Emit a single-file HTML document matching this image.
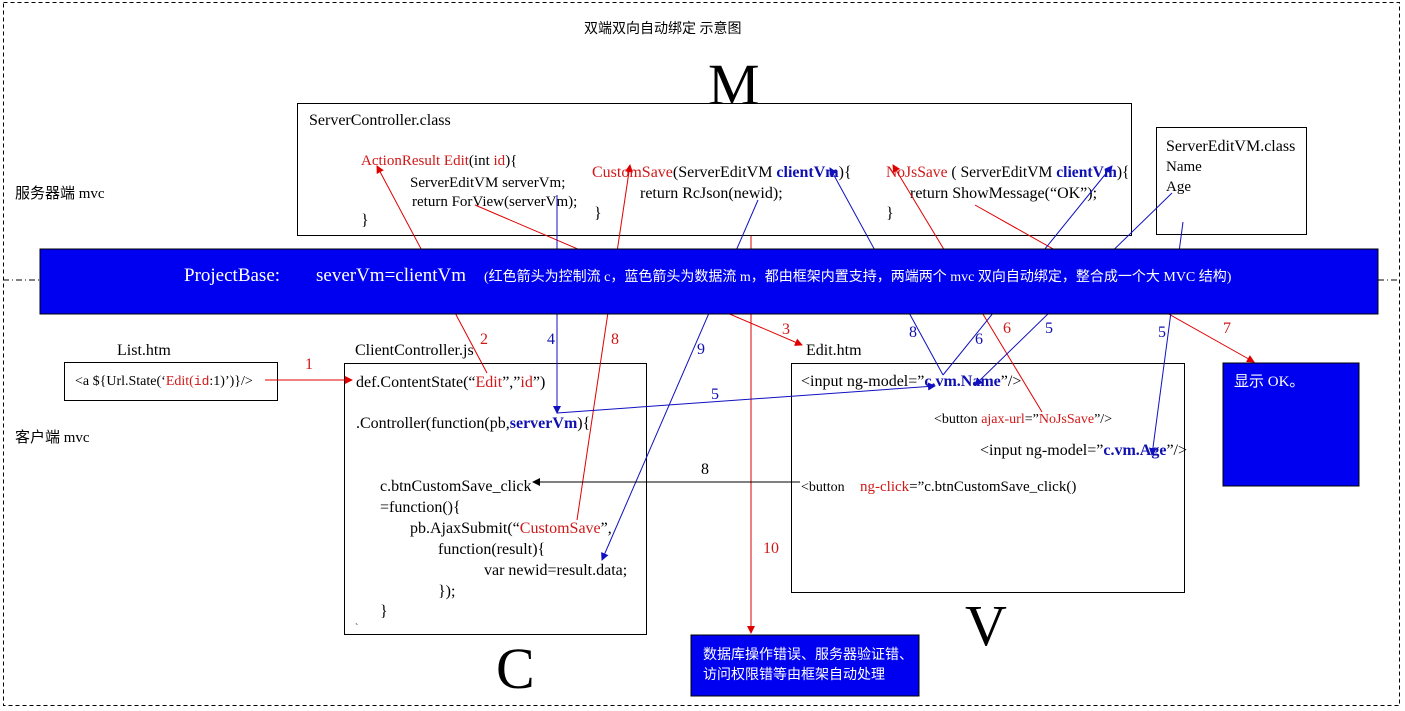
<!DOCTYPE html>
<html><head><meta charset="utf-8"><style>
body{margin:0;background:#fff}
svg{display:block}
text{font-family:"Liberation Serif","Noto Serif CJK SC",serif;font-size:16px;fill:#000}
.cn{font-family:"Liberation Serif","Noto Sans CJK SC",sans-serif}
.r{fill:#d01818}.b{fill:#1010b0;font-weight:bold}.w{fill:#fff}
</style></head><body>
<svg width="1405" height="711" viewBox="0 0 1405 711">
<defs>
<marker id="ar" markerWidth="8" markerHeight="8" refX="7" refY="4" orient="auto" markerUnits="userSpaceOnUse"><path d="M0,0L8,4L0,8z" fill="#e00000"/></marker>
<marker id="ab" markerWidth="8" markerHeight="8" refX="7" refY="4" orient="auto" markerUnits="userSpaceOnUse"><path d="M0,0L8,4L0,8z" fill="#1010c0"/></marker>
<marker id="ak" markerWidth="8" markerHeight="8" refX="7" refY="4" orient="auto" markerUnits="userSpaceOnUse"><path d="M0,0L8,4L0,8z" fill="#000"/></marker>
</defs>
<rect x="3.5" y="2.5" width="1396" height="703" fill="none" stroke="#000" stroke-dasharray="4,3"/>
<line x1="3" y1="280" x2="40" y2="280" stroke="#000" stroke-dasharray="6,3,1,3"/>
<line x1="1378" y1="280" x2="1400" y2="280" stroke="#000" stroke-dasharray="6,3,1,3"/>
<text x="584" y="33" class="cn" style="font-size:14px">双端双向自动绑定  示意图</text>
<text x="708" y="104" style="font-size:58px">M</text>
<rect x="297.5" y="103.5" width="834" height="132" fill="#fff" stroke="#000"/>
<text x="309" y="125">ServerController.class</text>
<text x="361" y="165" style="font-size:15px"><tspan class="r">ActionResult Edit</tspan>(int <tspan class="r">id</tspan>){</text>
<text x="410" y="187" style="font-size:15px">ServerEditVM serverVm;</text>
<text x="412" y="206" style="font-size:15px">return ForView(serverVm);</text>
<text x="594" y="218">}</text>
<text x="361" y="225">}</text>
<text x="592" y="177"><tspan class="r">CustomSave</tspan>(ServerEditVM <tspan class="b">clientVm</tspan>){</text>
<text x="640" y="198">return RcJson(newid);</text>
<text x="886" y="177" style="font-size:15.6px"><tspan class="r">NoJsSave</tspan> ( ServerEditVM <tspan class="b">clientVm</tspan>){</text>
<text x="910" y="198">return ShowMessage(“OK”);</text>
<text x="886" y="218">}</text>
<rect x="1156.5" y="127.5" width="150" height="107" fill="#fff" stroke="#000"/>
<text x="1166" y="151">ServerEditVM.class</text>
<text x="1166" y="171" style="font-size:15px">Name</text>
<text x="1166" y="191" style="font-size:15px">Age</text>
<text x="15" y="198" class="cn" style="font-size:15px">服务器端 mvc</text>
<text x="15" y="442" class="cn" style="font-size:15px">客户端 mvc</text>
<text x="117" y="355">List.htm</text>
<rect x="64.5" y="362.5" width="213" height="38" fill="#fff" stroke="#000"/>
<text x="75" y="385" style="font-size:14px">&lt;a ${Url.State(‘<tspan class="r">Edit(</tspan><tspan class="r" style="font-family:'Liberation Mono';font-size:13px">id</tspan>:1)’)}/&gt;</text>
<text x="355" y="355">ClientController.js</text>
<rect x="344.5" y="363.5" width="302" height="271" fill="#fff" stroke="#000"/>
<text x="356" y="387">def.ContentState(“<tspan class="r">Edit</tspan>”,”<tspan class="r">id</tspan>”)</text>
<text x="356" y="428">.Controller(function(pb,<tspan class="b">serverVm</tspan>){</text>
<text x="380" y="491">c.btnCustomSave_click</text>
<text x="380" y="512">=function(){</text>
<text x="410" y="533">pb.AjaxSubmit(“<tspan class="r">CustomSave</tspan>”,</text>
<text x="438" y="554">function(result){</text>
<text x="484" y="575">var newid=result.data;</text>
<text x="438" y="596">});</text>
<text x="380" y="616">}</text>
<text x="355" y="631" style="font-size:10px">`</text>
<text x="496" y="688" style="font-size:58px">C</text>
<text x="806" y="355">Edit.htm</text>
<rect x="791.5" y="363.5" width="393" height="229" fill="#fff" stroke="#000"/>
<text x="801" y="386">&lt;input ng-model=”<tspan class="b">c.vm.Name</tspan>”/&gt;</text>
<text x="934" y="423" style="font-size:14px">&lt;button <tspan class="r">ajax-url</tspan>=”<tspan class="r">NoJsSave</tspan>”/&gt;</text>
<text x="980" y="455">&lt;input ng-model=”<tspan class="b">c.vm.Age</tspan>”/&gt;</text>
<text x="801" y="491" style="font-size:14px">&lt;button</text>
<text x="860" y="491" style="font-size:15px"><tspan class="r">ng-click</tspan>=”c.btnCustomSave_click()</text>
<text x="965" y="645" style="font-size:58px">V</text>
<rect x="1223" y="363" width="136" height="123" fill="#0000f0" stroke="#000"/>
<text x="1234" y="386" class="w cn" style="font-size:15px">显示 OK。</text>
<rect x="691" y="635" width="228" height="61" fill="#0000f0" stroke="#000"/>
<text x="703" y="659" class="w cn" style="font-size:14px">数据库操作错误、服务器验证错、</text>
<text x="703" y="679" class="w cn" style="font-size:14px">访问权限错等由框架自动处理</text>
<g stroke="#e00000" stroke-width="1" fill="none">
<line x1="265" y1="380" x2="352" y2="380" marker-end="url(#ar)"/>
<line x1="487" y1="373" x2="377" y2="166" marker-end="url(#ar)"/>
<line x1="475" y1="205" x2="802" y2="345" marker-end="url(#ar)"/>
<line x1="577" y1="520" x2="630" y2="165" marker-end="url(#ar)"/>
<line x1="1042" y1="412" x2="893" y2="165" marker-end="url(#ar)"/>
<line x1="975" y1="205" x2="1254" y2="362" marker-end="url(#ar)"/>
<line x1="751" y1="236" x2="751" y2="633" marker-end="url(#ar)"/>
</g>
<g stroke="#1010c0" stroke-width="1" fill="none">
<line x1="557" y1="195" x2="557" y2="413" marker-end="url(#ab)"/>
<line x1="557" y1="413" x2="935" y2="386" marker-end="url(#ab)"/>
<line x1="758" y1="200" x2="602" y2="560" marker-end="url(#ab)"/>
<line x1="943" y1="375" x2="830" y2="168" marker-end="url(#ab)"/>
<line x1="943" y1="375" x2="1112" y2="166" marker-end="url(#ab)"/>
<line x1="1172" y1="193" x2="975" y2="385" marker-end="url(#ab)"/>
<line x1="1183" y1="222" x2="1152" y2="455" marker-end="url(#ab)"/>
</g>
<line x1="800" y1="482" x2="533" y2="482" stroke="#000" marker-end="url(#ak)"/>
<rect x="40" y="249" width="1338" height="65" fill="#0000f0" stroke="#000"/>
<text x="184" y="281" class="w" style="font-size:19px">ProjectBase:</text>
<text x="316" y="281" class="w" style="font-size:19px">severVm=clientVm</text>
<text x="484" y="281" class="w cn" style="font-size:14px">(红色箭头为控制流 c，蓝色箭头为数据流 m，都由框架内置支持，两端两个 mvc 双向自动绑定，整合成一个大 MVC 结构)</text>
<g style="font-size:13px">
<text x="305" y="369" class="r">1</text>
<text x="480" y="344" class="r">2</text>
<text x="782" y="334" class="r">3</text>
<text x="547" y="344" style="fill:#1010b0">4</text>
<text x="611" y="344" class="r">8</text>
<text x="697" y="354" style="fill:#1010b0">9</text>
<text x="711" y="399" style="fill:#1010b0">5</text>
<text x="701" y="474">8</text>
<text x="763" y="553" class="r">10</text>
<text x="909" y="337" style="fill:#1010b0">8</text>
<text x="975" y="344" style="fill:#1010b0">6</text>
<text x="1003" y="333" class="r">6</text>
<text x="1045" y="333" style="fill:#1010b0">5</text>
<text x="1158" y="337" style="fill:#1010b0">5</text>
<text x="1223" y="333" class="r">7</text>
</g>
</svg>
</body></html>
